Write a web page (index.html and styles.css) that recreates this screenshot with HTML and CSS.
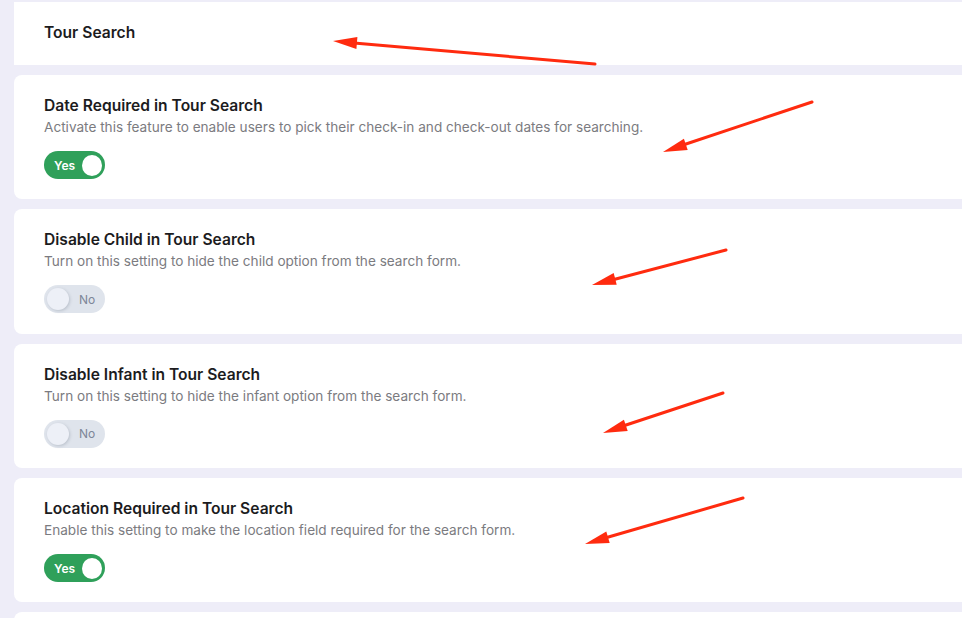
FILE: index.html
```html
<!DOCTYPE html>
<html lang="en">

<head>
    <meta charset="UTF-8">
    <meta name="viewport" content="width=device-width, initial-scale=1.0">
    <title>Tour Search Settings</title>
    <link rel="stylesheet" href="styles.css">
</head>

<body>
    <div class="settings-list">
        <div class="setting-card section-head">
            <h2>Tour Search</h2>
        </div>

        <div class="setting-card">
            <h3>Date Required in Tour Search</h3>
            <p>Activate this feature to enable users to pick their check-in and check-out dates for searching.</p>
            <label class="switch on">
                <span class="switch-text">Yes</span>
                <span class="knob"></span>
            </label>
        </div>

        <div class="setting-card">
            <h3>Disable Child in Tour Search</h3>
            <p>Turn on this setting to hide the child option from the search form.</p>
            <label class="switch">
                <span class="knob"></span>
                <span class="switch-text">No</span>
            </label>
        </div>

        <div class="setting-card">
            <h3>Disable Infant in Tour Search</h3>
            <p>Turn on this setting to hide the infant option from the search form.</p>
            <label class="switch">
                <span class="knob"></span>
                <span class="switch-text">No</span>
            </label>
        </div>

        <div class="setting-card">
            <h3>Location Required in Tour Search</h3>
            <p>Enable this setting to make the location field required for the search form.</p>
            <label class="switch on">
                <span class="switch-text">Yes</span>
                <span class="knob"></span>
            </label>
        </div>

        <div class="setting-card tail"></div>
    </div>

    <!-- annotation arrows drawn on top of the settings -->
    <svg class="arrows" width="962" height="618" viewBox="0 0 962 618">
        <g stroke="#ff2b0f" stroke-width="3" stroke-linecap="round">
            <line x1="595" y1="64" x2="354" y2="43" />
            <line x1="812" y1="102" x2="683" y2="145" />
            <line x1="726" y1="250" x2="612" y2="280" />
            <line x1="723" y1="393" x2="623" y2="426" />
            <line x1="743" y1="498" x2="605" y2="538" />
        </g>
        <g fill="#ff2b0f">
            <polygon points="333,41 356.4,49.1 357.4,37.1" />
            <polygon points="663,152 687.7,150.1 683.9,138.7" />
            <polygon points="592,285 616.7,284.7 613.7,273.1" />
            <polygon points="603,433 627.7,431.1 623.9,419.7" />
            <polygon points="585,544 609.7,543.1 606.3,531.5" />
        </g>
    </svg>
</body>

</html>
```

FILE: styles.css
```css
body {
    margin: 0;
    background-color: #eeedf8;
    font-family: Inter, "Noto Sans", sans-serif;
    overflow: hidden;
    position: relative;
    height: 618px;
}

.settings-list {
    display: flex;
    flex-direction: column;
    gap: 10px;
    padding: 2px 0 0 14px;
    margin-right: -20px;
}

.setting-card {
    background-color: #fff;
    border-radius: 8px;
    padding: 21px 30px 20.35px;
}

.section-head {
    border-radius: 0;
    padding: 21px 30px 22px;
}

.tail {
    height: 20px;
    padding: 0;
}

h2,
h3 {
    margin: 0;
    font-size: 15.6px;
    line-height: 20px;
    font-weight: 600;
    color: #1c1c1e;
}

p {
    margin: 1px 0 14px;
    font-size: 13.6px;
    line-height: 20px;
    color: #7b7b80;
}

.switch {
    display: flex;
    align-items: center;
    width: 61px;
    height: 28px;
    box-sizing: border-box;
    padding: 0 3px;
    border-radius: 14px;
    background-color: #dfe4ec;
    gap: 10px;
    cursor: pointer;
}

.switch .knob {
    width: 22px;
    height: 22px;
    border-radius: 50%;
    background-color: #edf0f7;
    box-shadow: 1px 1px 3px rgba(80, 90, 110, 0.25);
}

.switch-text {
    font-size: 12px;
    color: #7d8698;
}

.switch.on {
    background-color: #2fa05a;
    padding: 0 3px 0 10px;
    gap: 7px;
}

.switch.on .knob {
    width: 21px;
    height: 21px;
    background-color: #fff;
    box-shadow: none;
}

.switch.on .switch-text {
    color: #fff;
    font-weight: 600;
}

.arrows {
    position: absolute;
    top: 0;
    left: 0;
    pointer-events: none;
}
```
